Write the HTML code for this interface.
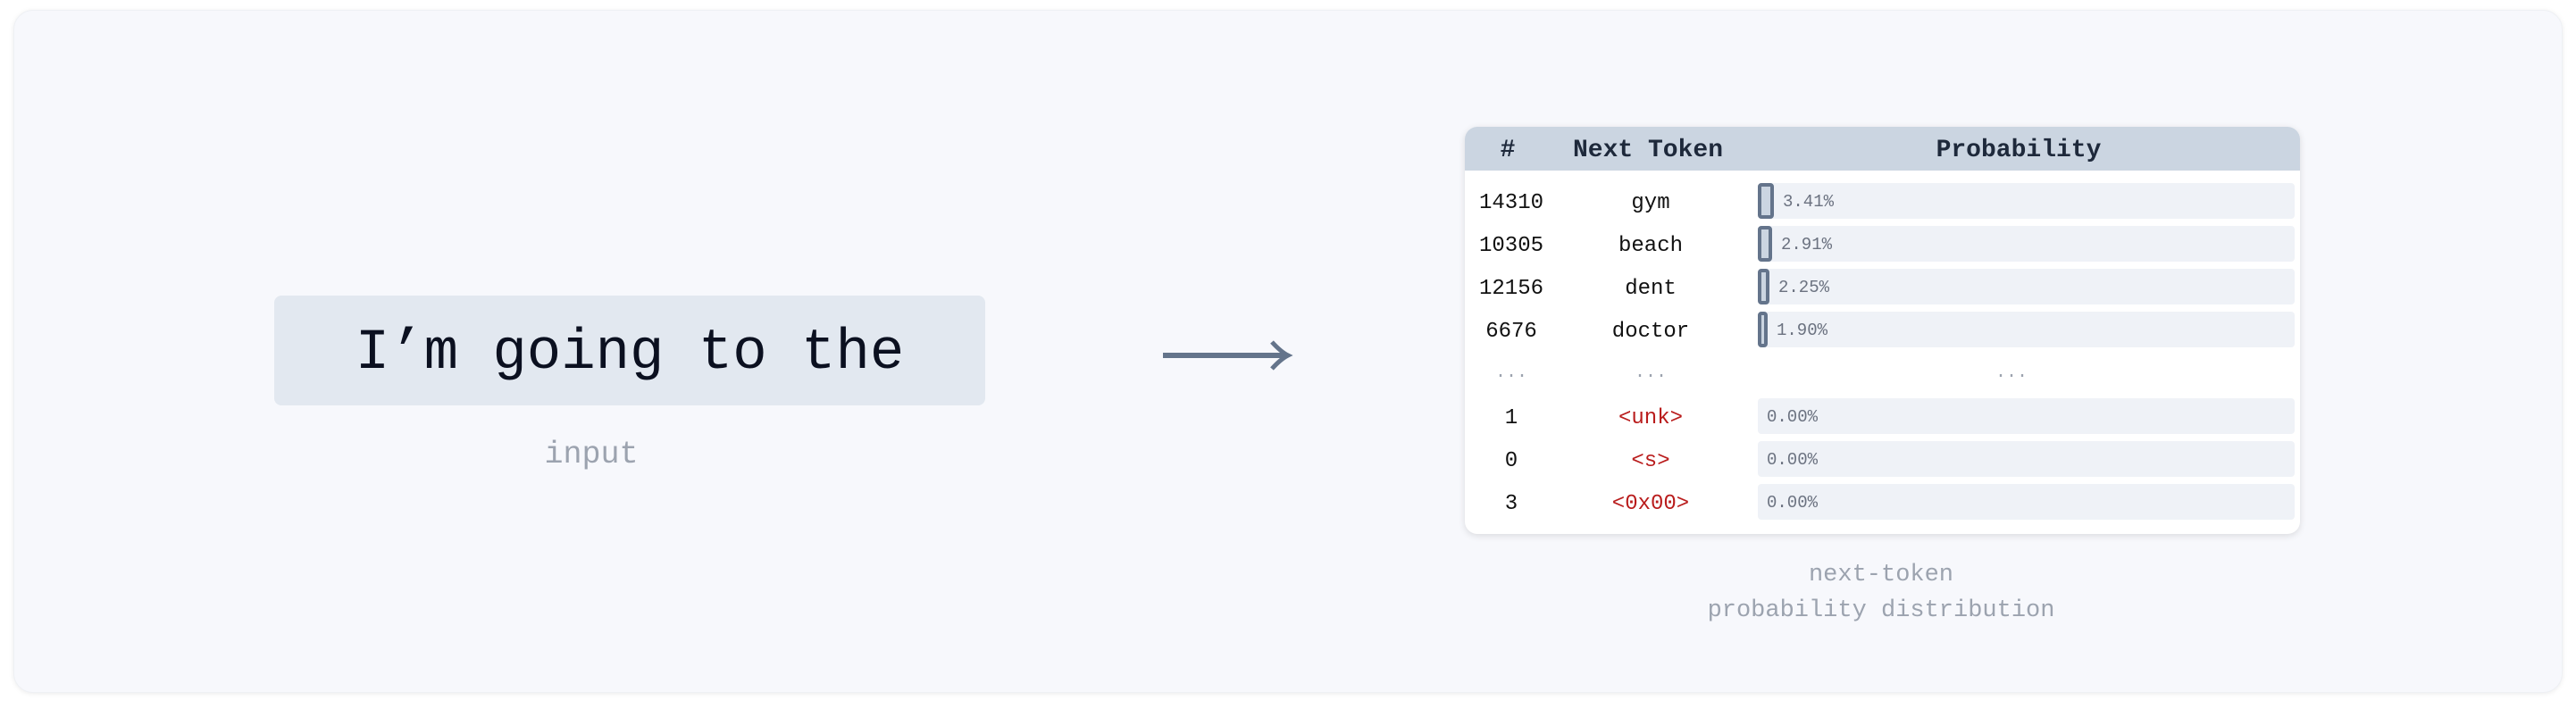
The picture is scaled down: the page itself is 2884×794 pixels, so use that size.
<!DOCTYPE html>
<html><head><style>
*{margin:0;padding:0;box-sizing:border-box}
body{width:2884px;height:794px;background:#fff;position:relative;font-family:"Liberation Mono",monospace;overflow:hidden}
.outer{position:absolute;left:15px;top:11px;width:2854px;height:765px;background:#f7f8fc;border-radius:22px;box-shadow:0 1px 6px rgba(0,0,0,.08);border:1px solid #eef0f4}
.inp{position:absolute;left:307px;top:331px;width:796px;height:123px;background:#e2e8f0;border-radius:8px;font-size:64px;color:#0b1020;text-align:center;line-height:131px}
.lbl{position:absolute;color:#9ca3af;text-align:center}
.tbl{position:absolute;left:1640px;top:142px;width:935px;height:456px;background:#fff;border-radius:14px;box-shadow:0 2px 8px rgba(0,0,0,.12);overflow:hidden}
.hd{position:absolute;left:0;top:0;width:100%;height:49px;background:#cbd5e1;font-weight:bold;font-size:28px;color:#1e293b}
.hd span,.c{position:absolute;transform:translateX(-50%);white-space:nowrap}
.hd span{top:11px}
.c{font-size:24px;color:#111}
.red{color:#b91c1c}
.bar{position:absolute;left:328px;width:601px;height:40px;background:#eff2f7;border-radius:4px}
.ind{position:absolute;left:0;top:0;height:40px;background:#cbd5e1;border:4px solid #64748b;border-radius:4px}
.pct{position:absolute;top:10px;font-size:19px;color:#6b7280}
.dots{color:#9ca3af;font-size:20px}
</style></head><body>
<div class="outer"></div>
<div class="inp">I’m going to the</div>
<div class="lbl" style="left:562px;top:489px;width:200px;font-size:35px">input</div>
<svg style="position:absolute;left:1300px;top:380px" width="150" height="36"><line x1="2" y1="18" x2="138" y2="18" stroke="#64748b" stroke-width="6"/><path d="M124 3 Q134 14 142 18 Q134 22 124 33" fill="none" stroke="#64748b" stroke-width="5"/></svg>
<div class="tbl">
<div class="hd"><span style="left:48px">#</span><span style="left:205px">Next Token</span><span style="left:620px">Probability</span></div>
<div class="c" style="left:52px;top:72px">14310</div><div class="c" style="left:208px;top:72px">gym</div>
<div class="bar" style="top:63px"><div class="ind" style="width:18px"></div><span class="pct" style="left:28px">3.41%</span></div>
<div class="c" style="left:52px;top:120px">10305</div><div class="c" style="left:208px;top:120px">beach</div>
<div class="bar" style="top:111px"><div class="ind" style="width:16px"></div><span class="pct" style="left:26px">2.91%</span></div>
<div class="c" style="left:52px;top:168px">12156</div><div class="c" style="left:208px;top:168px">dent</div>
<div class="bar" style="top:159px"><div class="ind" style="width:13px"></div><span class="pct" style="left:23px">2.25%</span></div>
<div class="c" style="left:52px;top:216px">6676</div><div class="c" style="left:208px;top:216px">doctor</div>
<div class="bar" style="top:207px"><div class="ind" style="width:11px"></div><span class="pct" style="left:21px">1.90%</span></div>
<div class="c dots" style="left:52px;top:264px">...</div><div class="c dots" style="left:208px;top:264px">...</div><div class="c dots" style="left:612px;top:264px">...</div>
<div class="c" style="left:52px;top:313px">1</div><div class="c red" style="left:208px;top:313px">&lt;unk&gt;</div>
<div class="bar" style="top:304px"><span class="pct" style="left:10px">0.00%</span></div>
<div class="c" style="left:52px;top:361px">0</div><div class="c red" style="left:208px;top:361px">&lt;s&gt;</div>
<div class="bar" style="top:352px"><span class="pct" style="left:10px">0.00%</span></div>
<div class="c" style="left:52px;top:409px">3</div><div class="c red" style="left:208px;top:409px">&lt;0x00&gt;</div>
<div class="bar" style="top:400px"><span class="pct" style="left:10px">0.00%</span></div>
</div>
<div class="lbl" style="left:1806px;top:624px;width:600px;font-size:27px;line-height:40px">next-token<br>probability distribution</div>
</body></html>
